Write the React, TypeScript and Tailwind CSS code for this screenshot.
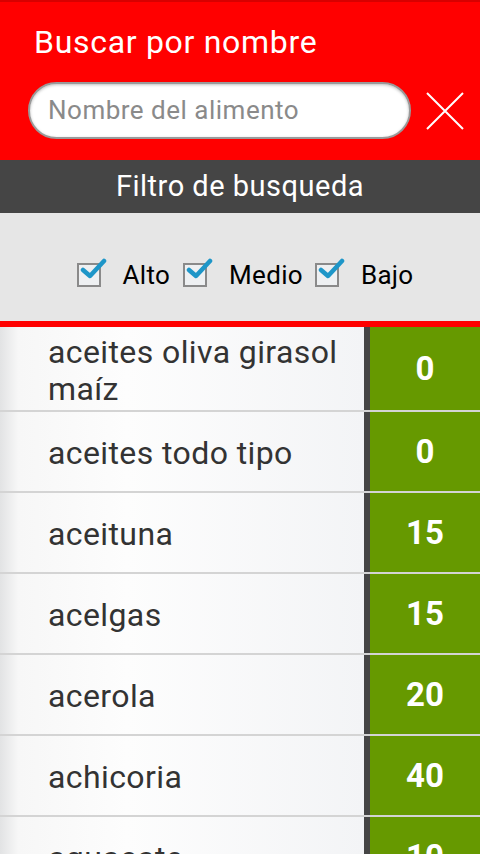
import React from "react";

const foods = [
  { name: "aceites oliva girasol maíz", value: 0 },
  { name: "aceites todo tipo", value: 0 },
  { name: "aceituna", value: 15 },
  { name: "acelgas", value: 15 },
  { name: "acerola", value: 20 },
  { name: "achicoria", value: 40 },
  { name: "aguacate", value: 10 },
];

const CheckBox = () => (
  <span className="relative inline-block shrink-0 w-[24px] h-[24px] border-2 border-[#8a8a8a] bg-[#eef0f2]">
    <svg
      className="absolute -top-[10px] left-[1px] w-[28px] h-[28px]"
      viewBox="0 0 28 28"
    >
      <path
        d="M3 15 L10 21 L24 6"
        fill="none"
        stroke="#1e96c8"
        strokeWidth="4.5"
        strokeLinecap="round"
        strokeLinejoin="round"
      />
    </svg>
  </span>
);

export default function App() {
  return (
    <div
      className="w-[480px] h-[854px] overflow-hidden bg-white"
      style={{ fontFamily: "Roboto, 'Noto Sans', sans-serif" }}
    >
      {/* HEADER */}
      <div className="h-[160px] bg-[#ff0000] border-t-2 border-[#d80000] flex flex-col">
        <h1 className="pl-[34px] pt-[21px] text-[32px] leading-[38px] tracking-[0.7px] text-white">
          Buscar por nombre
        </h1>
        <div className="flex items-center mt-[21px] pl-[28px]">
          <div className="w-[383px] h-[57px] rounded-full bg-white border-2 border-[#9a9a9a] flex items-center pl-[18px] shadow-[inset_0_1px_3px_rgba(0,0,0,0.25)]">
            <span className="text-[26px] tracking-[0.5px] text-[#8a8a8a]">
              Nombre del alimento
            </span>
          </div>
          <svg className="ml-[15px] w-[38px] h-[38px]" viewBox="0 0 38 38">
            <path d="M1 1 L37 37 M37 1 L1 37" stroke="white" strokeWidth="2" />
          </svg>
        </div>
      </div>

      {/* FILTER */}
      <div className="h-[53px] bg-[#454545] flex items-center justify-center">
        <span className="text-[29px] tracking-[0.5px] text-white">Filtro de busqueda</span>
      </div>
      <div className="h-[108px] bg-[#e6e6e6] flex items-center justify-center pt-[16px] pl-[10px] text-[26px] tracking-[0.3px] text-black">
        <CheckBox />
        <span className="ml-[22px] mr-[13px]">Alto</span>
        <CheckBox />
        <span className="ml-[22px] mr-[12px]">Medio</span>
        <CheckBox />
        <span className="ml-[22px]">Bajo</span>
      </div>
      <div className="h-[6px] bg-[#ff0000]" />

      {/* LIST */}
      <div className="flex flex-col">
        {foods.map((food, index) => (
          <div
            key={food.name}
            className={`flex border-b-2 border-[#d4d4d4] ${
              index === 0 ? "h-[85px]" : "h-[81px]"
            }`}
          >
            <div className="w-[364px] flex items-center pl-[48px] pr-[16px] pt-[4px] bg-[linear-gradient(to_right,#e2e3e4_0%,#f7f7f7_5%,#fdfdfd_35%,#f3f4f6_100%)]">
              <span className="text-[32px] leading-[37px] tracking-[0.4px] text-[#333333]">
                {food.name}
              </span>
            </div>
            <div className="w-[6px] bg-[#454545]" />
            <div className="flex-1 bg-[#669900] flex items-center justify-center">
              <span className="text-[33px] font-bold text-white">{food.value}</span>
            </div>
          </div>
        ))}
      </div>
    </div>
  );
}
